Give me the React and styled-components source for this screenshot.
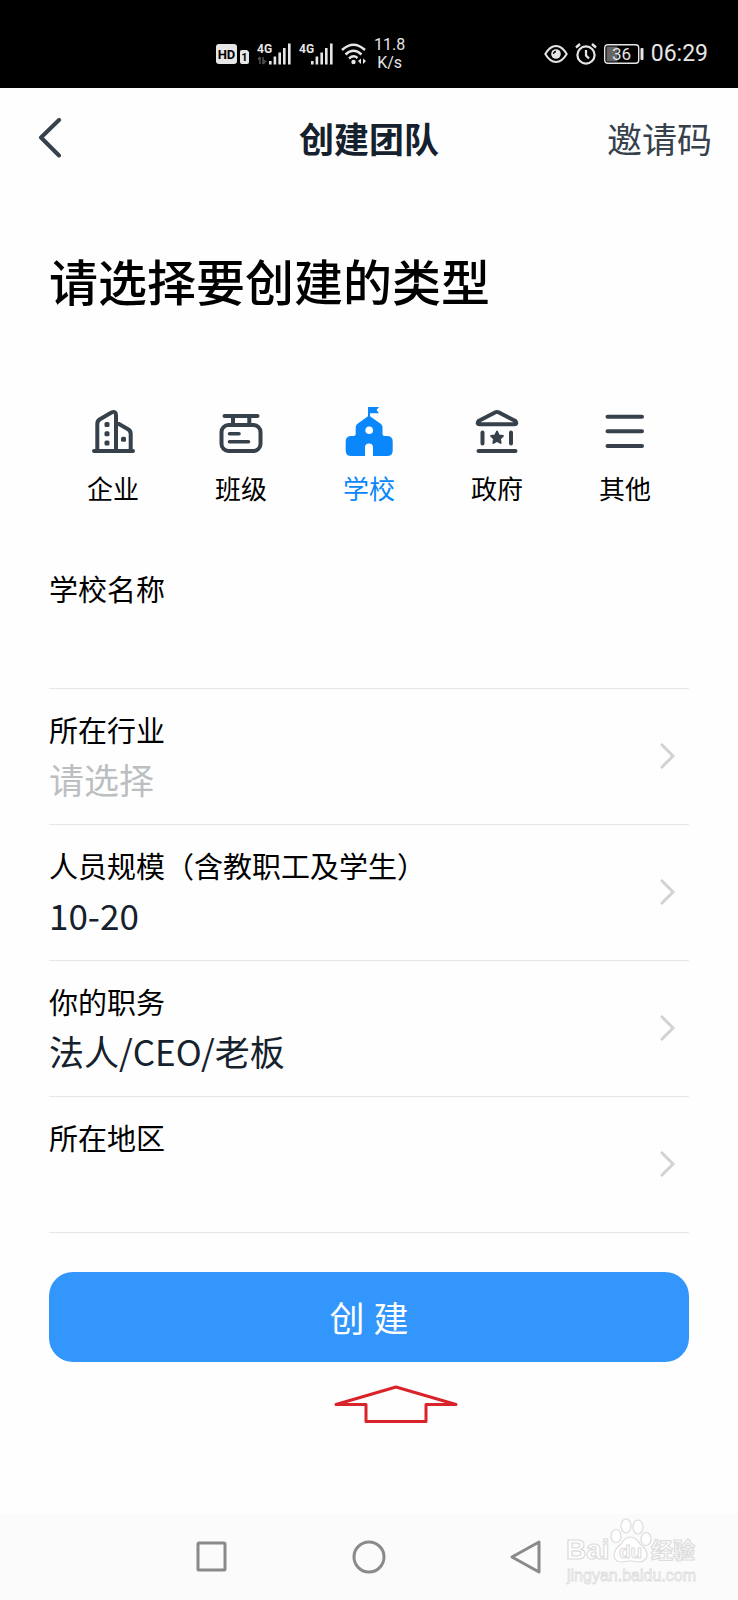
import React, { useState } from 'react';
import styled, { createGlobalStyle } from 'styled-components';

const colors = {
    ink: '#15212c',
    icon: '#36414b',
    blue: '#0a87fb',
    button: '#3396fc',
    line: '#e6e6e6',
    muted: '#bcbfc1',
    status: '#e6e6e6',
    nav: '#8a8a8a',
    red: '#d9232a',
}

const GlobalStyle = createGlobalStyle`
    * {
        box-sizing: border-box;
    }

    body {
        margin: 0;
        background-color: #fefefe;
        font-family: "Noto Sans CJK SC", sans-serif;
        color: black;
    }

    button, input, select {
        font-family: inherit;
        border: none;
        background: none;
        padding: 0;
        margin: 0;
    }

    button {
        cursor: pointer;
    }

    svg {
        display: block;
        flex-shrink: 0;
    }
`

/* ---------- status bar ---------- */

const StatusBar = styled.div`
    display: flex;
    justify-content: space-between;
    align-items: center;
    height: 88px;
    padding: 20px 30px 0 29%;
    background-color: black;
    color: ${colors.status};
    font-family: Roboto, sans-serif;
`

const StatusGroup = styled.div`
    display: flex;
    align-items: center;
    gap: 7px;
`

const Speed = styled.div`
    font-size: 16px;
    line-height: 18px;
    text-align: center;
`

const Clock = styled.time`
    font-size: 23px;
    line-height: 28px;
`

const HdIcon = () => (
    <svg width="36" height="22" viewBox="-2 0 36 22">
        <rect x="0" y="1" width="21" height="20" rx="3" fill={colors.status} />
        <text x="10.5" y="16" textAnchor="middle" fontFamily="Roboto, sans-serif" fontWeight="700" fontSize="13" fill="black">HD</text>
        <path d="M26 7 H31 L33 9 V19 Q33 21 31 21 H26 Q24 21 24 19 V9 Q24 7 26 7Z" fill={colors.status} />
        <text x="28.5" y="18" textAnchor="middle" fontFamily="Roboto, sans-serif" fontWeight="700" fontSize="11" fill="black">1</text>
    </svg>
)

const SignalIcon = ({ data }) => (
    <svg width="35" height="22" viewBox="0 0 35 22">
        <text x="0" y="10" fontFamily='"Liberation Sans Narrow", Roboto, sans-serif' fontWeight="700" fontSize="12" fill={colors.status}>4G</text>
        {data && <path d="M3 14 V21 M3 14 L1 16.5 M6 14 V21 M6 21 L8.5 18.5 L6 17" stroke="#555" strokeWidth="1.4" fill="none" />}
        <g fill={colors.status}>
            <rect x="12" y="18" width="2.6" height="3.5" />
            <rect x="16.6" y="13.5" width="2.6" height="8" />
            <rect x="21.4" y="9.5" width="2.6" height="12" />
            <rect x="26" y="5" width="2.6" height="16.5" />
            <rect x="31" y="0.5" width="2.6" height="21" />
        </g>
    </svg>
)

const WifiIcon = () => (
    <svg width="26" height="22" viewBox="0 0 26 22" fill="none" stroke={colors.status} strokeWidth="2.4">
        <path d="M1 7 Q12.5 -3.5 24 7" />
        <path d="M4.5 11.5 Q12.5 4 20.5 11.5" />
        <path d="M8 15.5 Q12.5 11.5 16.5 15" />
        <circle cx="12.5" cy="19" r="2.2" fill={colors.status} stroke="none" />
        <path d="M20 15.5 V21 L17 18Z M22 15.5 L25 18 L22 21Z" fill={colors.status} stroke="none" />
    </svg>
)

const EyeIcon = () => (
    <svg width="24" height="20" viewBox="0 0 24 20" fill="none" stroke={colors.status} strokeWidth="2">
        <path d="M1.3 10 Q6 2 12 2 Q18 2 22.7 10 Q18 18 12 18 Q6 18 1.3 10Z" />
        <circle cx="12" cy="10" r="4.8" fill={colors.status} stroke="none" />
        <path d="M9.5 10 Q9.7 7.8 12 7.5" stroke="black" strokeWidth="1.3" />
    </svg>
)

const AlarmIcon = () => (
    <svg width="22" height="22" viewBox="0 0 22 22" fill="none" stroke={colors.status} strokeWidth="2.2">
        <circle cx="11" cy="12" r="8.6" />
        <path d="M11 7 V12.5 L14 15.5" />
        <path d="M1 4.5 L5 1 M17 1 L21 4.5" strokeWidth="2.4" />
    </svg>
)

const BatteryIcon = () => (
    <svg width="40" height="20" viewBox="0 0 40 20">
        <rect x="0.7" y="0.7" width="34" height="18.6" rx="3" fill="none" stroke={colors.status} strokeWidth="1.4" />
        <rect x="2.5" y="2.5" width="11" height="15" fill="#666" />
        <rect x="36.5" y="4" width="3" height="12" rx="1" fill={colors.status} />
        <text x="17.5" y="16" textAnchor="middle" fontFamily="Roboto, sans-serif" fontSize="17" fill={colors.status}>36</text>
    </svg>
)

/* ---------- header ---------- */

const Header = styled.header`
    display: grid;
    grid-template-columns: 1fr auto 1fr;
    align-items: center;
    height: 100px;
    padding: 0 26px;
`

const BackButton = styled.button`
    justify-self: start;
    padding: 0 12px;
`

const Title = styled.h1`
    margin: 0;
    font-size: 35px;
    line-height: 48px;
    font-weight: bold;
    color: ${colors.ink};
`

const InviteButton = styled.button`
    justify-self: end;
    font-size: 35px;
    line-height: 48px;
    color: ${colors.icon};
`

/* ---------- team type ---------- */

const Content = styled.main`
    display: flex;
    flex-direction: column;
    padding: 60px 49px 36px;
`

const Heading = styled.h2`
    margin: 0;
    font-size: 49px;
    line-height: 64px;
    font-weight: 500;
`

const TypeList = styled.div`
    display: grid;
    grid-template-columns: repeat(5, 1fr);
    margin-top: 94px;
`

const TypeButton = styled.button`
    display: flex;
    flex-direction: column;
    align-items: center;
    gap: 12px;
    font-size: 26px;
    line-height: 36px;
    color: ${props => (props.$active ? colors.blue : 'black')};
`

const LineIcon = ({ children }) => (
    <svg width="48" height="52" viewBox="0 0 48 52" fill="none" stroke={colors.icon} strokeWidth="4" strokeLinecap="round" strokeLinejoin="round">
        {children}
    </svg>
)

const CompanyIcon = () => (
    <LineIcon>
        <path d="M5 45 H44" />
        <path d="M8.3 45 V18 Q8.3 15 10.5 13.5 L22.5 6.5 Q27 4.5 27 9 V45" />
        <path d="M28 18 H30 L39.5 23.5 Q41.7 25 41.7 28 V45" />
        <g fill={colors.icon} stroke="none">
            <rect x="15.5" y="16" width="5" height="5" rx="1.5" />
            <rect x="15.5" y="25.3" width="5" height="5" rx="1.5" />
            <rect x="15.5" y="34.6" width="5" height="5" rx="1.5" />
            <rect x="32" y="30.8" width="5" height="5" rx="1.5" />
        </g>
    </LineIcon>
)

const ClassIcon = () => (
    <LineIcon>
        <path d="M7.5 10 H40.500" />
        <path d="M16 10 V18 M32.3 10 V18" />
        <rect x="4.5" y="19" width="39" height="26" rx="7" />
        <path d="M12.5 27.7 H22 M12.5 35.7 H31.5" strokeWidth="3.6" />
    </LineIcon>
)

const SchoolIcon = () => (
    <svg width="48" height="52" viewBox="0 0 48 52" fill={colors.blue}>
        <path d="M23 1 H34 L31.5 4 L34 7.3 H25 V10.3 L36 18 Q37.5 19.3 37.5 21 V28 Q37.5 30 39.5 30 H42 Q47.7 30 47.7 35.5 V44.5 Q47.7 50 42 50 H28 V41.5 Q28 37.5 24 37.5 Q20 37.5 20 41.5 V50 H6.3 Q0.7 50 0.7 44.5 V35.5 Q0.7 30 6.3 30 H8.7 Q10.7 30 10.7 28 V21 Q10.7 19.3 12.2 18 L23 10.3Z" />
        <circle cx="24.2" cy="24.3" r="3.8" fill="white" />
    </svg>
)

const GovernmentIcon = () => (
    <LineIcon>
        <path d="M22.5 6.3 Q24 5.5 25.5 6.3 L42.5 15 Q44.5 18.3 41.5 18.3 H6.5 Q3.5 18.3 5.5 15Z" />
        <path d="M9.5 26.5 V37.5 M38 26.5 V37.5" />
        <path d="M24 25.5 L25.9 29.3 L30 29.9 L27 32.8 L27.7 37 L24 35 L20.3 37 L21 32.8 L18 29.9 L22.1 29.3Z" fill={colors.icon} strokeWidth="1.8" />
        <path d="M5.5 45 H42.5" />
    </LineIcon>
)

const OtherIcon = () => (
    <LineIcon>
        <path d="M6.5 10.7 H41 M6.5 25.3 H41 M6.5 40 H41" />
    </LineIcon>
)

const types = [
    { name: '企业', Icon: CompanyIcon },
    { name: '班级', Icon: ClassIcon },
    { name: '学校', Icon: SchoolIcon },
    { name: '政府', Icon: GovernmentIcon },
    { name: '其他', Icon: OtherIcon },
]

/* ---------- form ---------- */

const Form = styled.form`
    display: flex;
    flex-direction: column;
    margin-top: 42px;
`

const Row = styled.div`
    display: grid;
    grid-template-columns: 1fr auto;
    align-items: center;
    column-gap: 16px;
    padding: 20px 13px ${props => (props.$tall ? 24 : 19)}px 0;
    border-bottom: 1px solid ${colors.line};
`

const Field = styled.div`
    display: flex;
    flex-direction: column;
    gap: 4px;
    min-width: 0;
`

const Label = styled.label`
    font-size: 29px;
    line-height: 40px;
`

const Input = styled.input`
    width: 100%;
    height: 52px;
    font-size: 35px;
    outline: none;
    color: ${colors.ink};
`

const Select = styled.select`
    appearance: none;
    width: 100%;
    height: 52px;
    font-size: 35px;
    line-height: 52px;
    outline: none;
    color: ${props => (props.$empty ? colors.muted : colors.ink)};
`

const SubmitButton = styled.button`
    height: 90px;
    margin-top: 39px;
    padding-top: 4px;
    border-radius: 24px;
    background-color: ${colors.button};
    color: white;
    font-family: "Noto Sans", "Noto Sans CJK SC", sans-serif;
    font-size: 35px;
    line-height: 48px;
`

const ArrowUp = styled.svg`
    align-self: center;
    margin: 22px 0 0 54px;
`

const SelectRow = ({ id, label, options }) => {
    const [value, setValue] = useState(options[0]);

    return (
        <Row>
            <Field>
                <Label htmlFor={id}>{label}</Label>
                <Select id={id} value={value} $empty={value === '请选择'} onChange={e => setValue(e.target.value)}>
                    {options.map(option => <option key={option} value={option}>{option}</option>)}
                </Select>
            </Field>
            <svg width="16" height="28" viewBox="0 0 16 28" fill="none" stroke="#d2d2d2" strokeWidth="3">
                <path d="M1 1 L13 13 L1 25" />
            </svg>
        </Row>
    )
}

/* ---------- bottom navigation ---------- */

const NavBar = styled.nav`
    position: relative;
    display: flex;
    justify-content: center;
    height: 86px;
    margin-top: auto;
    background-color: #fbfbfb;
`

const NavButtons = styled.div`
    display: grid;
    grid-template-columns: repeat(3, 1fr);
    width: 64%;
`

const NavButton = styled.button`
    display: flex;
    justify-content: center;
    align-items: center;
`

const Watermark = styled.svg`
    position: absolute;
    right: 38px;
    bottom: 14px;
    pointer-events: none;
`

const NavIcon = ({ children }) => (
    <svg width="36" height="36" viewBox="0 0 36 36" fill="none" stroke={colors.nav} strokeWidth="3" strokeLinejoin="round">
        {children}
    </svg>
)

const Page = styled.div`
    display: flex;
    flex-direction: column;
    min-height: 100vh;
`

const App = () => {

    const [type, setType] = useState('学校');

    return (
        <Page>
            <GlobalStyle />

            <StatusBar>
                <StatusGroup>
                    <HdIcon />
                    <SignalIcon data />
                    <SignalIcon />
                    <WifiIcon />
                    <Speed>11.8<br />K/s</Speed>
                </StatusGroup>
                <StatusGroup>
                    <EyeIcon />
                    <AlarmIcon />
                    <BatteryIcon />
                    <Clock>06:29</Clock>
                </StatusGroup>
            </StatusBar>

            <Header>
                <BackButton aria-label="返回">
                    <svg width="24" height="40" viewBox="0 0 24 40" fill="none" stroke={colors.icon} strokeWidth="4" strokeLinecap="round" strokeLinejoin="round">
                        <path d="M21 2 L3 19.5 L21 37.5" />
                    </svg>
                </BackButton>
                <Title>创建团队</Title>
                <InviteButton>邀请码</InviteButton>
            </Header>

            <Content>
                <Heading>请选择要创建的类型</Heading>

                <TypeList>
                    {types.map(({ name, Icon }) => (
                        <TypeButton key={name} $active={type === name} aria-pressed={type === name} onClick={() => setType(name)}>
                            <Icon />
                            {name}
                        </TypeButton>
                    ))}
                </TypeList>

                <Form onSubmit={e => e.preventDefault()}>
                    <Row $tall>
                        <Field>
                            <Label htmlFor="name">学校名称</Label>
                            <Input id="name" type="text" />
                        </Field>
                    </Row>
                    <SelectRow id="industry" label="所在行业" options={['请选择']} />
                    <SelectRow id="size" label="人员规模（含教职工及学生）" options={['10-20']} />
                    <SelectRow id="job" label="你的职务" options={['法人/CEO/老板']} />
                    <SelectRow id="area" label="所在地区" options={['']} />

                    <SubmitButton type="submit">创 建</SubmitButton>
                </Form>

                <ArrowUp width="126" height="40" viewBox="0 0 126 40" fill="none" stroke={colors.red} strokeWidth="3" strokeLinejoin="round">
                    <path d="M63 3 L123 20.5 H93 V37.5 H33 V20.5 H3Z" />
                </ArrowUp>
            </Content>

            <NavBar>
                <NavButtons>
                    <NavButton aria-label="最近任务">
                        <NavIcon><rect x="4" y="4" width="27" height="27" rx="1" /></NavIcon>
                    </NavButton>
                    <NavButton aria-label="主页">
                        <NavIcon><circle cx="18" cy="18" r="15" /></NavIcon>
                    </NavButton>
                    <NavButton aria-label="返回上一页">
                        <NavIcon><path d="M31 3 V33 L4 18Z" /></NavIcon>
                    </NavButton>
                </NavButtons>

                <Watermark width="136" height="70" viewBox="0 0 136 70" fill="white" stroke="#dcdcdc" strokeWidth="1.2" fontFamily='"Liberation Sans", "Noto Sans CJK SC", sans-serif' fontWeight="bold">
                    <text x="2" y="43" fontSize="28">Bai</text>
                    <ellipse cx="52" cy="20" rx="5" ry="6.5" />
                    <ellipse cx="62" cy="10" rx="5" ry="7" />
                    <ellipse cx="74" cy="11" rx="5" ry="7" />
                    <ellipse cx="82" cy="23" rx="5" ry="6.5" />
                    <path d="M66 21 Q72 21 76 28 Q84 34 83 40 Q81 46 75 46 Q66 44 58 46 Q51 46 50 40 Q50 33 57 28 Q61 21 66 21Z" />
                    <text x="55" y="42" fontSize="19" strokeWidth="1">du</text>
                    <text x="87" y="42" fontSize="22">经验</text>
                    <text x="3" y="65" fontSize="16" strokeWidth="0.8" fontWeight="normal">jingyan.baidu.com</text>
                </Watermark>
            </NavBar>
        </Page>
    )
}

export default App
